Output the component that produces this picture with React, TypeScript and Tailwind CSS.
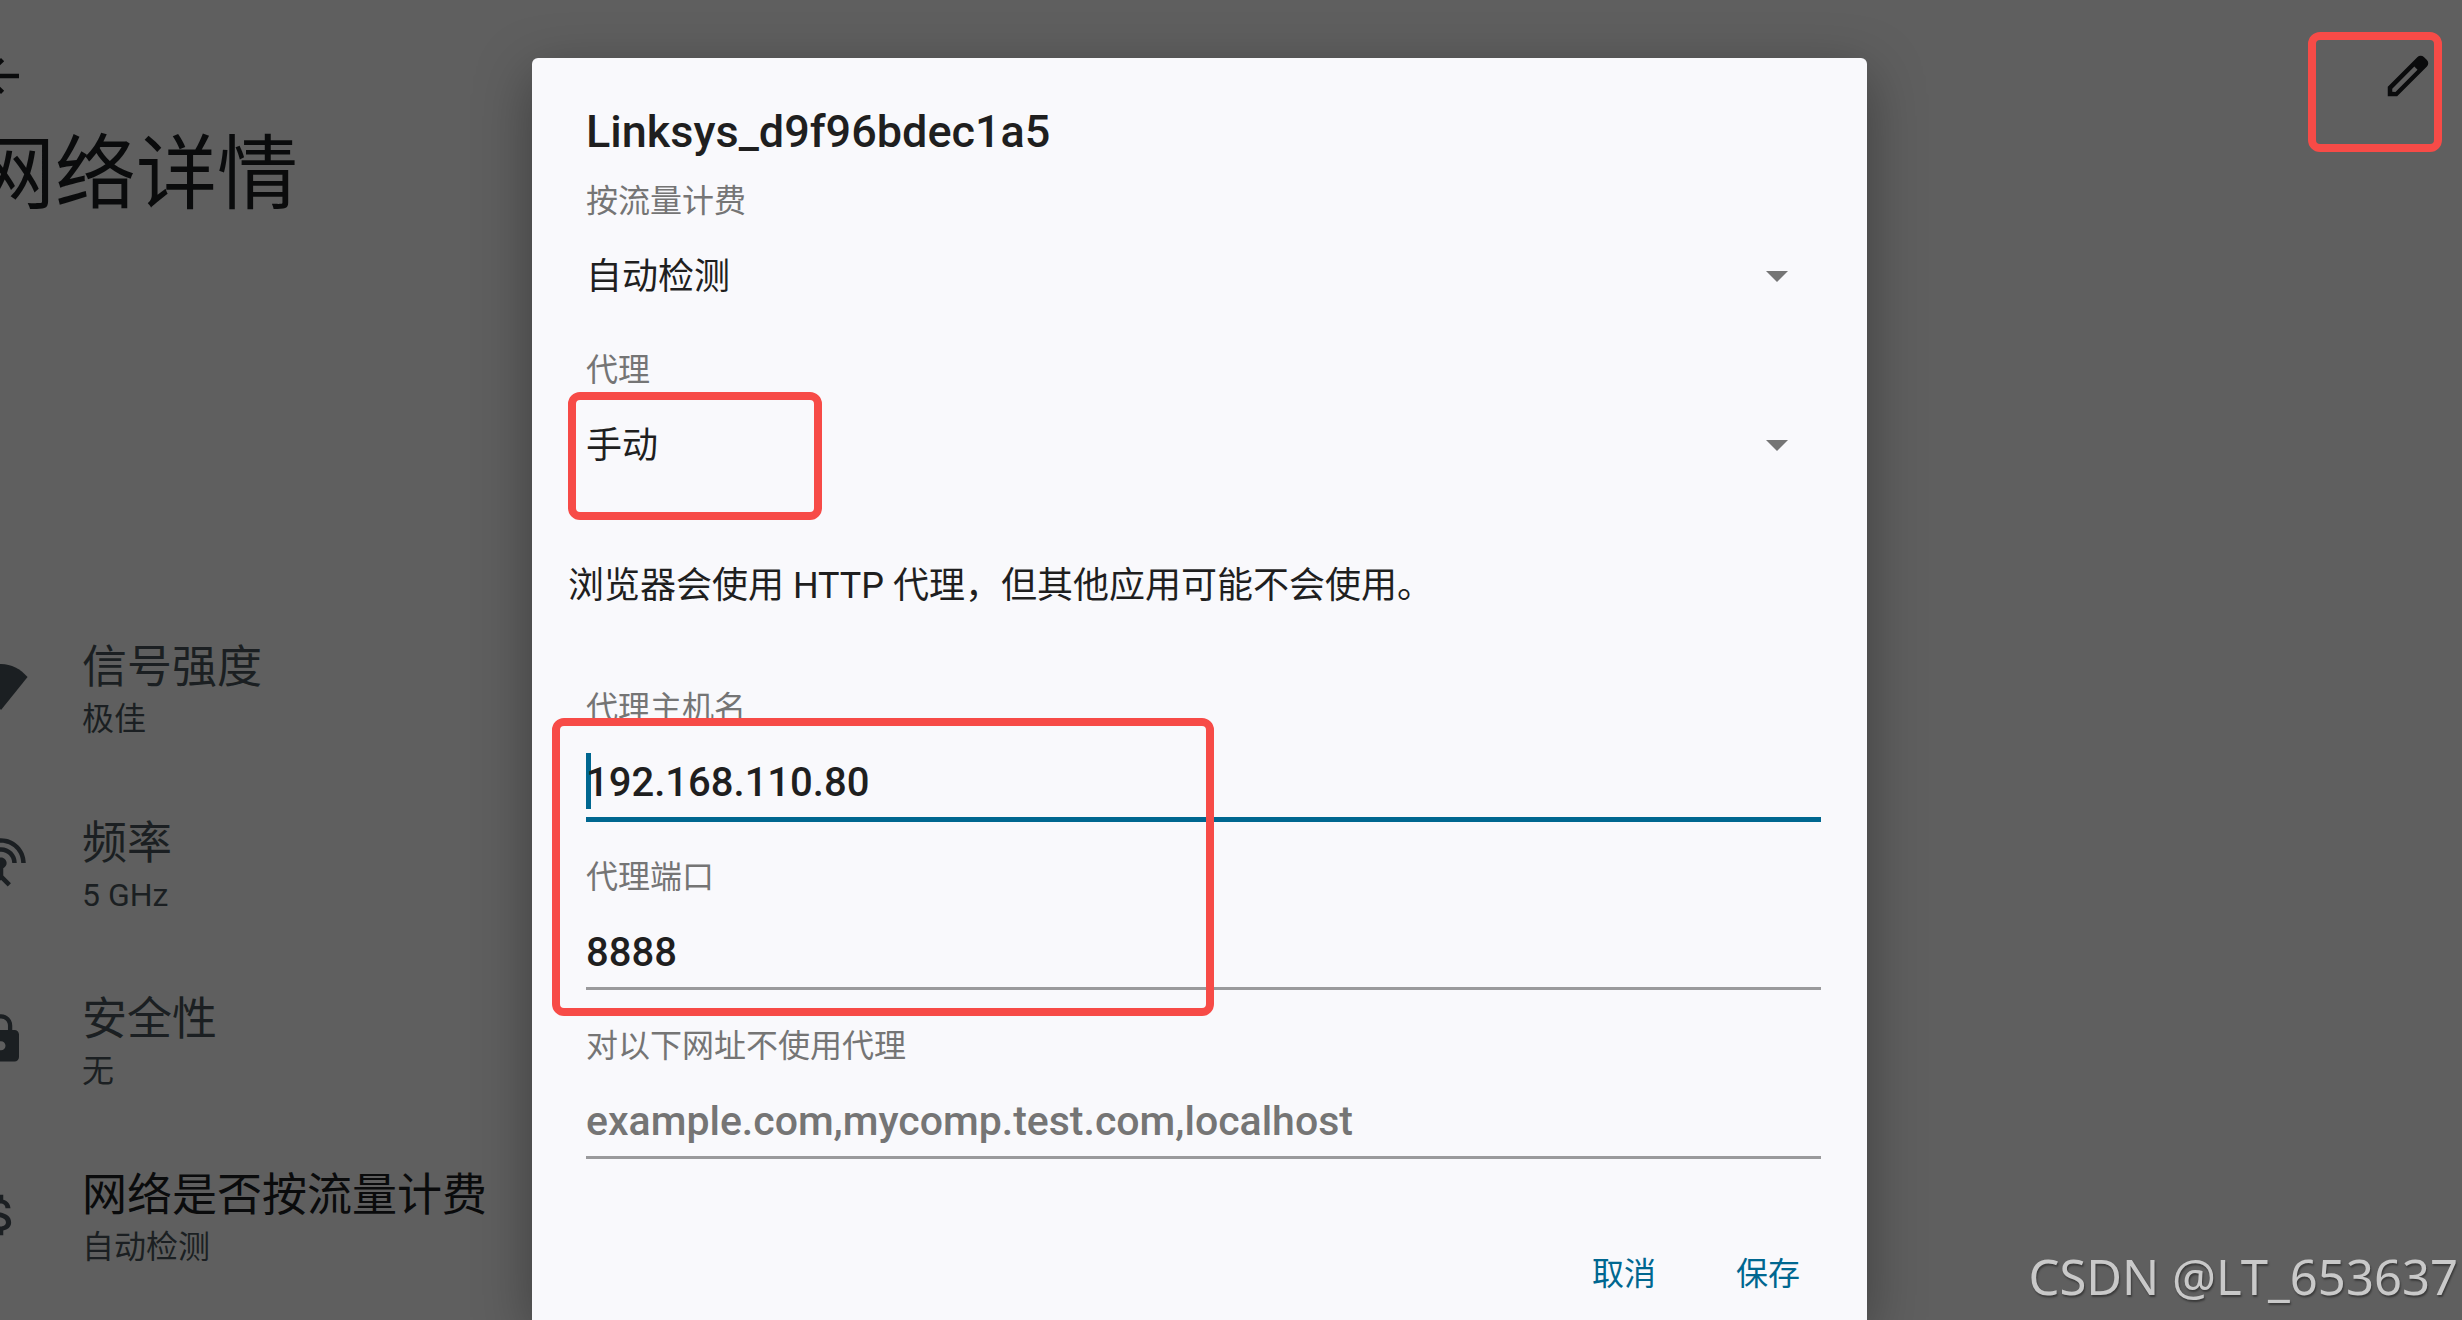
import React from "react";

const details = [
  {
    title: "信号强度",
    value: "极佳",
    strong: false,
    icon: "M12 22.2L23.8 7.6C20.6 4 16.6 1.8 12 1.8S3.4 4 .2 7.6z",
  },
  {
    title: "频率",
    value: "5 GHz",
    strong: false,
    icon: "M12 5c-3.87 0-7 3.13-7 7h2c0-2.76 2.24-5 5-5s5 2.24 5 5h2c0-3.87-3.13-7-7-7zm1 9.29c.88-.39 1.5-1.26 1.5-2.29 0-1.38-1.12-2.5-2.5-2.5S9.5 10.62 9.5 12c0 1.02.62 1.9 1.5 2.29v3.3L7.59 21 9 22.41l3-3 3 3L16.41 21 13 17.59v-3.3zM12 1C5.93 1 1 5.93 1 12h2c0-4.97 4.03-9 9-9s9 4.03 9 9h2c0-6.07-4.93-11-11-11z",
  },
  {
    title: "安全性",
    value: "无",
    strong: false,
    icon: "M18 8h-1V6c0-2.76-2.24-5-5-5S7 3.24 7 6v2H6c-1.1 0-2 .9-2 2v10c0 1.1.9 2 2 2h12c1.1 0 2-.9 2-2V10c0-1.1-.9-2-2-2zm-6 9c-1.1 0-2-.9-2-2s.9-2 2-2 2 .9 2 2-.9 2-2 2zm3.1-9H8.9V6c0-1.71 1.39-3.1 3.1-3.1 1.71 0 3.1 1.39 3.1 3.1v2z",
  },
  {
    title: "网络是否按流量计费",
    value: "自动检测",
    strong: true,
    icon: "M11.8 10.9c-2.27-.59-3-1.2-3-2.15 0-1.09 1.01-1.85 2.7-1.85 1.78 0 2.44.85 2.5 2.1h2.21c-.07-1.72-1.12-3.3-3.21-3.81V3h-3v2.16c-1.94.42-3.5 1.68-3.5 3.61 0 2.31 1.91 3.46 4.7 4.13 2.5.6 3 1.48 3 2.41 0 .69-.49 1.79-2.7 1.79-2.06 0-2.87-.92-2.98-2.1h-2.2c.12 2.19 1.76 3.42 3.68 3.83V21h3v-2.15c1.95-.37 3.5-1.5 3.5-3.55 0-2.84-2.43-3.81-4.7-4.4z",
  },
];

function Icon({ path }: { path: string }) {
  return (
    <svg viewBox="0 0 24 24" className="size-[54px] shrink-0" fill="currentColor" aria-hidden="true">
      <path d={path} />
    </svg>
  );
}

/* Red rounded frame that marks a spot; its parent gives the reference box. */
function Marker({ className }: { className: string }) {
  return (
    <div className={`pointer-events-none absolute z-10 rounded-xl border-8 border-[#f74b47] ${className}`} />
  );
}

function Field({ id, label, children }: { id: string; label: string; children: React.ReactNode }) {
  return (
    <div className="relative pb-[30px]">
      <label htmlFor={id} className="block text-[32px] leading-[50px] text-[#757575]">
        {label}
      </label>
      {children}
    </div>
  );
}

function SelectField({ id, label, options, children }: { id: string; label: string; options: string[]; children?: React.ReactNode }) {
  return (
    <Field id={id} label={label}>
      <div className="relative">
        <select
          id={id}
          className="block h-[89px] w-full appearance-none bg-transparent pt-[17px] pb-1 text-[36px] text-[#1f1f1f] outline-none"
        >
          {options.map((o) => (
            <option key={o}>{o}</option>
          ))}
        </select>
        <svg viewBox="0 0 22 11" className="pointer-events-none absolute top-[45px] right-[33px] h-[11px] w-[22px]" aria-hidden="true">
          <path d="M0 0h22L11 11z" fill="#757575" />
        </svg>
      </div>
      {children}
    </Field>
  );
}

function TextField({ id, label, value, placeholder, active, children }: { id: string; label: string; value?: string; placeholder?: string; active?: boolean; children?: React.ReactNode }) {
  return (
    <Field id={id} label={label}>
      <div className="relative h-[89px]">
        {active && <span className="absolute top-5 left-0 h-14 w-[5px] bg-[#006790]" />}
        <input
          id={id}
          type="text"
          defaultValue={value}
          placeholder={placeholder}
          className={`relative block w-full bg-transparent pt-[15px] font-medium text-[#1f1f1f] outline-none placeholder:text-[#757575] placeholder:opacity-100 ${
            value ? "text-[40px]" : "text-[41px]"
          } ${active ? "h-[89px] border-b-5 border-[#006790]" : "h-[88px] border-b-3 border-[#9a9a9c]"}`}
        />
      </div>
      {children}
    </Field>
  );
}

export default function App() {
  return (
    <div className="grid h-screen grid-cols-[532px_1fr_595px] grid-rows-[minmax(0,1fr)] overflow-hidden bg-[#5f5f5f] font-[Roboto,'Noto_Sans_CJK_SC',sans-serif]">
      <aside className="min-w-0 overflow-hidden">
        <div className="-ml-[26px] pt-[49px]">
          <button type="button" aria-label="返回" className="block text-[#0a0b0c]">
            <Icon path="M20 11H7.83l5.59-5.59L12 4l-8 8 8 8 1.41-1.41L7.83 13H20v-2z" />
          </button>
          <h1 className="pt-3 text-[81px] leading-[120px] whitespace-nowrap text-[#0a0b0c]">网络详情</h1>
          <ul className="pt-[364px]">
            {details.map((d) => (
              <li key={d.title} className="flex items-center gap-[54px] py-[35px] whitespace-nowrap text-[#1b1f22]">
                <Icon path={d.icon} />
                <div className="pt-1">
                  <div className={`text-[45px] leading-[60px] ${d.strong ? "text-[#0a0b0c]" : ""}`}>{d.title}</div>
                  <div className="text-[32px] leading-[42px]">{d.value}</div>
                </div>
              </li>
            ))}
          </ul>
        </div>
      </aside>

      <main
        role="dialog"
        aria-labelledby="dialog-title"
        className="mt-[58px] min-w-0 rounded-t-md bg-[#f9f9fc] pt-[42px] pr-[46px] pl-[54px] shadow-[0_16px_56px_rgba(0,0,0,0.35)]"
      >
        <h2 id="dialog-title" className="pb-3 text-[45px] leading-[64px] font-medium text-[#1f1f1f]">
          Linksys_d9f96bdec1a5
        </h2>
        <SelectField id="metered" label="按流量计费" options={["自动检测"]} />
        <SelectField id="proxy" label="代理" options={["手动"]}>
          <Marker className="top-[47px] -left-[18px] h-32 w-[254px]" />
        </SelectField>
        <p className="-ml-[18px] pt-12 pb-[73px] text-[36px] leading-[48px] text-[#1f1f1f]">
          浏览器会使用 HTTP 代理，但其他应用可能不会使用。
        </p>
        <TextField id="host" label="代理主机名" value="192.168.110.80" active>
          <Marker className="top-[35px] -left-[34px] h-[298px] w-[662px]" />
        </TextField>
        <TextField id="port" label="代理端口" value="8888" />
        <TextField id="bypass" label="对以下网址不使用代理" placeholder="example.com,mycomp.test.com,localhost" />
        <div className="flex justify-end gap-20 pt-[60px] pr-[21px] text-[32px] leading-[48px] text-[#006790]">
          <button type="button">取消</button>
          <button type="button">保存</button>
        </div>
      </main>

      <aside className="relative flex flex-col items-end justify-between">
        <button type="button" aria-label="修改" className="mt-[49px] mr-[27px] text-[#0a0b0c]">
          <Icon path="M20.41 4.94l-1.35-1.35c-.78-.78-2.05-.78-2.83 0L3 16.82V21h4.18L20.41 7.77c.79-.78.79-2.05 0-2.83zM6.41 19.06L5 19v-1.36l9.82-9.82 1.41 1.41-9.82 9.83z" />
        </button>
        <Marker className="top-8 right-5 h-[120px] w-[134px]" />
        <div className="pr-1 pb-3 font-['Noto_Sans',sans-serif] text-[49px] leading-[64px] text-[#c9c9c9] [text-shadow:1px_2px_2px_rgba(0,0,0,0.4)]">
          CSDN @LT_653637
        </div>
      </aside>
    </div>
  );
}
